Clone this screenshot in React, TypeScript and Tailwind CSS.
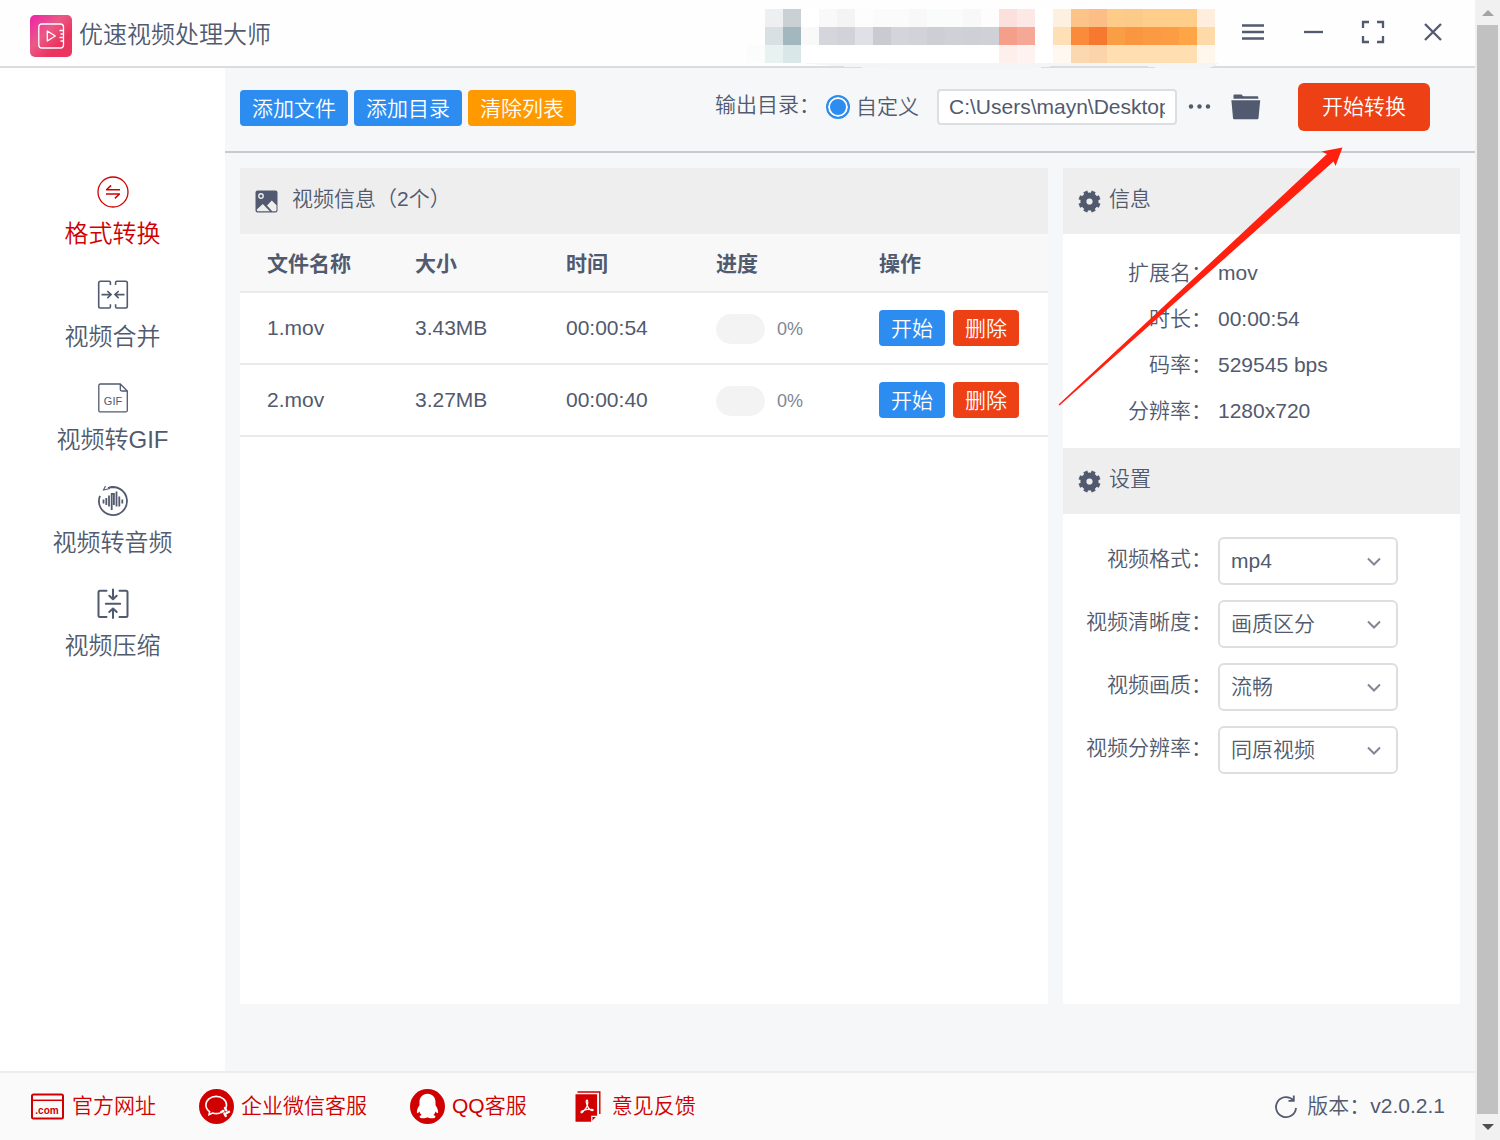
import { useState, type ReactNode } from 'react';

const mosaic = [
  ['#eeeff1', '#cad0d4', '#fff', '#f9f9f9', '#f4f4f4', '#fdfdfd', '#fbfbfb', '#fbfbfb', '#f8f8f8', '#fafcfb', '#fbfbfb', '#f8f8f8', '#fdfdfd', '#fce0db', '#fce8e4', '#fff', '#fef0e0', '#fcc488', '#fcbd86', '#fecb88', '#fccb89', '#ffce8a', '#ffcf8a', '#ffce8a', '#ffeedd'],
  ['#d9e0e4', '#a3b8be', '#f9f9f9', '#d5d6db', '#d2d3d8', '#e0e1e6', '#cacbd1', '#d4d5da', '#d2d3d8', '#ccd0d4', '#d0d1d7', '#cdd0d5', '#d0d1d7', '#f59f8b', '#f6a896', '#fff', '#ffdfb5', '#f98b3a', '#f6792f', '#f99e45', '#fa963f', '#fc9a43', '#fc9d45', '#ffa545', '#fddaa8'],
  ['#e8f2f0', '#d9e7e8', '#fff', '#fff', '#fff', '#fff', '#fff', '#fff', '#fff', '#fff', '#fff', '#fff', '#fff', '#fdefec', '#fef3f1', '#fff', '#fff8f0', '#fcd8b0', '#fcd4ac', '#ffdfb1', '#ffdfb1', '#ffdfb1', '#ffdfb1', '#ffdfb1', '#fff6ec'],
];

const videos = [
  { name: '1.mov', size: '3.43MB', time: '00:00:54', progress: 0 },
  { name: '2.mov', size: '3.27MB', time: '00:00:40', progress: 0 },
];

const info = [
  ['扩展名', 'mov'],
  ['时长', '00:00:54'],
  ['码率', '529545 bps'],
  ['分辨率', '1280x720'],
];

const settings = [
  { id: 'format', label: '视频格式', options: ['mp4', 'avi', 'mkv'] },
  { id: 'clarity', label: '视频清晰度', options: ['画质区分', '码率区分'] },
  { id: 'quality', label: '视频画质', options: ['流畅', '标清', '高清'] },
  { id: 'resolution', label: '视频分辨率', options: ['同原视频', '1920x1080', '1280x720'] },
];

const ConvertIcon = () => (
  <svg width="32" height="32" viewBox="0 0 32 32" fill="none" stroke="currentColor">
    <circle cx="16" cy="16" r="15" strokeWidth="1.3" />
    <path d="M9 13.800h14M9.500 13.800l4.600-4.400M23 18H9M22.500 18l-4.600 4.400" strokeWidth="1.500" />
  </svg>
);

const MergeIcon = () => (
  <svg width="32" height="32" viewBox="0 0 32 32" fill="none" stroke="currentColor" strokeWidth="1.600">
    <path d="M13.400 6V3.400c0-.8-.4-1.200-1.200-1.200H3.400C2.400 2.200 1.700 2.800 1.700 3.900v23.400c0 1.100.7 1.700 1.700 1.700h8.800c.8 0 1.200-.4 1.200-1.200v-2.600" />
    <path d="M18.600 6V3.400c0-.8.4-1.200 1.200-1.200h8.800c1 0 1.700.6 1.700 1.700v23.400c0 1.100-.7 1.700-1.700 1.700h-8.800c-.8 0-1.200-.4-1.200-1.200v-2.600" />
    <path d="M4.500 15.600h9.500M10.300 12l3.800 3.600-3.800 3.600M27.500 15.600H18M21.700 12l-3.800 3.600 3.800 3.600" />
  </svg>
);

const GifIcon = () => (
  <svg width="32" height="32" viewBox="0 0 32 32" fill="none" stroke="currentColor" strokeWidth="1.300">
    <path d="M3.300 2h20l7 7v19.400c0 .9-.6 1.500-1.500 1.500H3.300c-.9 0-1.500-.6-1.500-1.500V3.500C1.800 2.600 2.400 2 3.300 2z" />
    <path d="M23.300 2v5.500c0 .9.6 1.500 1.500 1.500h5.500" />
    <text x="16" y="22.500" fontSize="11" textAnchor="middle" fill="currentColor" stroke="none">GIF</text>
  </svg>
);

const AudioIcon = () => (
  <svg width="32" height="32" viewBox="0 0 32 32" fill="none" stroke="currentColor" strokeWidth="1.800">
    <path d="M3 10.800A14 14 0 1 0 11 3C13 2.200 15 1.900 17 2" />
    <path d="M13 3.500l-6.500 1.500 2-4" strokeWidth="1.100" />
    <path d="M6.500 14.500v4M9.300 13v7M12 10.500v11M14.700 25V8.800h2.200V20M19.500 6.500v15M22.300 11.500v10M25.300 14.500v4" strokeWidth="1.800" />
  </svg>
);

const CompressIcon = () => (
  <svg width="32" height="32" viewBox="0 0 32 32" fill="none" stroke="currentColor" strokeWidth="2" strokeLinecap="round" strokeLinejoin="round">
    <path d="M9.500 2.800H3c-1 0-1.500.5-1.500 1.500v23.200c0 1 .5 1.500 1.500 1.500h6.500M22.500 2.800H29c1 0 1.500.5 1.500 1.500v23.200c0 1-.5 1.500-1.500 1.500h-6.500" />
    <path d="M8.800 15.800h14.400M16 1.500v9.500M12.300 7.800L16 11.300l3.700-3.500M16 30v-9M12.300 24L16 20.500l3.700 3.500" />
  </svg>
);

const menu = [
  { label: '格式转换', icon: <ConvertIcon /> },
  { label: '视频合并', icon: <MergeIcon /> },
  { label: '视频转GIF', icon: <GifIcon /> },
  { label: '视频转音频', icon: <AudioIcon /> },
  { label: '视频压缩', icon: <CompressIcon /> },
];

const SiteIcon = () => (
  <svg width="35" height="35" viewBox="0 0 35 35" fill="none" stroke="currentColor" strokeWidth="2">
    <rect x="2" y="5.500" width="31" height="24" rx="1.500" />
    <path d="M2 11.300h31" strokeWidth="1.500" />
    <text x="17" y="25" fontSize="10" fontWeight="700" textAnchor="middle" fill="currentColor" stroke="none">.com</text>
  </svg>
);

const WechatIcon = () => (
  <svg width="35" height="35" viewBox="0 0 35 35" fill="none" stroke="#fff" strokeWidth="1.600">
    <circle cx="17.500" cy="17.500" r="17.500" fill="currentColor" stroke="none" />
    <path d="M27 18.800c.3-.9.5-1.800.5-2.700 0-4.900-4.600-8.700-10.300-8.700S6.900 11.200 6.900 16.100c0 2.700 1.500 5.100 3.700 6.600l-.5 3 3.400-1.700c2.300.8 5 .8 7.400.1" />
    <path d="M26 18.900l1.200 2.300M30 22.800l-2.400 1.200M26.700 26.900l-1.300-2.400M22 23.300l2.400-1.400" strokeWidth="2.400" strokeLinecap="round" />
  </svg>
);

const QQIcon = () => (
  <svg width="35" height="35" viewBox="0 0 35 35">
    <circle cx="17.500" cy="17.500" r="17.500" fill="currentColor" />
    <path d="M17.500 4.800c-5 0-8 3.700-8 8.200v3.200c-1.700 2.400-2.800 5-2.600 7.200.2 1.300 1.300.8 2.500-1 .4 1.500 1.100 2.700 2.200 3.700-1.300.5-2 1-2 1.700 0 2 6 1.900 7.900.5 1.900 1.400 7.900 1.500 7.900-.5 0-.7-.7-1.200-2-1.700 1.100-1 1.800-2.200 2.200-3.700 1.200 1.800 2.300 2.300 2.500 1 .2-2.200-.9-4.800-2.600-7.200V13c0-4.500-3-8.200-8-8.200z" fill="#fff" />
  </svg>
);

const FeedbackIcon = () => (
  <svg width="35" height="35" viewBox="0 0 35 35" fill="none">
    <path d="M7.500 3h22.300V25" stroke="currentColor" strokeWidth="1.400" />
    <path d="M5.500 5.300h21.600v21.500l-6 6H5.500z" fill="currentColor" />
    <path d="M21.800 32.800v-5.500h5.300" stroke="#fff" strokeWidth="1.200" />
    <path d="M17 11.200c-1.400 0-.7 3.200.3 5.300-.6 2-1.800 3.600-3.500 4.900-2 .5-3.300 1.300-2.700 2.100.7.800 1.900-.5 2.700-2.100 2-.9 4-1.200 6-.9 1.600 1.300 3.300 1.500 3.400.6.100-.9-1.700-.9-3.400-.6-1.300-1-2-2.300-2.500-4 .6-2 .8-5.300-.3-5.300z" stroke="#fff" strokeWidth="1.200" />
  </svg>
);

const links = [
  { label: '官方网址', icon: <SiteIcon /> },
  { label: '企业微信客服', icon: <WechatIcon /> },
  { label: 'QQ客服', icon: <QQIcon /> },
  { label: '意见反馈', icon: <FeedbackIcon /> },
];

const windowButtons = [
  { label: '菜单', path: 'M1 5.500h22M1 12h22M1 18.500h22' },
  { label: '最小化', path: 'M3 12h19' },
  { label: '最大化', path: 'M2 8V2h6M16 2h6v6M22 16v6h-6M8 22H2v-6' },
  { label: '关闭', path: 'M4 4l16 16M20 4L4 20' },
];

const teeth = [22.5, 67.5, 112.5, 157.5, 202.5, 247.5, 292.5, 337.5];

const GearIcon = () => (
  <svg width="23" height="23" viewBox="0 0 23 23" fill="none" stroke="currentColor">
    <circle cx="11.500" cy="11.500" r="6.100" strokeWidth="6" />
    {teeth.map((angle) => (
      <path key={angle} d="M11.500 4.500v-4" strokeWidth="4.200" transform={`rotate(${angle} 11.5 11.5)`} />
    ))}
  </svg>
);

const PictureIcon = () => (
  <svg width="23" height="23" viewBox="0 0 23 23">
    <rect x=".5" y=".5" width="22" height="22" rx="2" fill="currentColor" />
    <circle cx="6" cy="6" r="2.200" fill="none" stroke="#eee" strokeWidth="1.400" />
    <path d="M1.800 19.500l6-5.500 7 7.300H3c-.8 0-1.200-.6-1.200-1.800zM12 15.500l4.800-5 4.700 4.700v4.800c0 .8-.5 1.300-1.300 1.300h-3z" fill="#eee" />
  </svg>
);

const PanelHeader = ({ icon, children, className }: { icon: ReactNode; children: ReactNode; className: string }) => (
  <div className={`flex h-[66px] items-center bg-[#eeeeee] pl-[15px] ${className}`}>
    {icon}
    <h2 className="pb-1 text-[21px] leading-8">{children}</h2>
  </div>
);

const Header = () => (
  <header className="flex h-[68px] items-center border-b-2 border-[#dcdcdc] bg-[#fefefe] pr-3 pl-[30px]">
    <div className="flex flex-1 items-center gap-[7px] pt-[6px]">
      <svg width="42" height="42" viewBox="0 0 42 42" fill="none" stroke="#fff" className="shrink-0">
        <defs>
          <linearGradient id="logo" x1="0" y1="0" x2="1" y2="1">
            <stop offset="0" stopColor="#ee22aa" />
            <stop offset=".4" stopColor="#ea5a86" />
            <stop offset=".7" stopColor="#ea335f" />
            <stop offset="1" stopColor="#ea3560" />
          </linearGradient>
        </defs>
        <rect width="42" height="42" rx="5" fill="url(#logo)" stroke="none" />
        <path d="M33.500 14v-2c0-1.800-1.200-3-3-3H11.800c-1.800 0-3 1.200-3 3v18c0 1.800 1.200 3 3 3h18.700c1.800 0 3-1.200 3-3v-2M33.500 14v14M29.500 15.500h4M30.500 19h3M29.500 22.500h4M30.500 26h3" strokeWidth="1.300" />
        <path d="M17.300 16v10l8-5z" strokeWidth="1.300" strokeLinejoin="round" />
      </svg>
      <h1 className="pb-[2px] text-2xl">优速视频处理大师</h1>
    </div>
    {/* account area, pixelated */}
    <svg width="450" height="57" viewBox="0 0 450 57" shapeRendering="crispEdges" className="mr-2 shrink-0 self-end overflow-visible">
      <path d="M35 54H453l-3 3-10 3H400l-20-3H290l-28 3H125l-55-3z" fill="#f4f5f7" />
      <rect x="-18" y="36" width="18" height="18" fill="#fbfdfc" />
      {mosaic.map((row, y) =>
        row.map((color, x) => <rect key={`${x}-${y}`} x={x * 18} y={y * 18} width="18" height="18" fill={color} />)
      )}
    </svg>
    {windowButtons.map((button) => (
      <button key={button.label} aria-label={button.label} className="flex h-full w-[60px] shrink-0 items-center justify-center pb-[2px]">
        <svg width="24" height="24" viewBox="0 0 24 24" fill="none" stroke="currentColor" strokeWidth="2.300">
          <path d={button.path} />
        </svg>
      </button>
    ))}
  </header>
);

const Sidebar = () => {
  const [active, setActive] = useState('格式转换');

  return (
    <nav className="flex w-[225px] shrink-0 flex-col bg-white pt-[108px]">
      {menu.map((item) => (
        <button
          key={item.label}
          onClick={() => setActive(item.label)}
          className={`flex h-[103px] flex-col items-center gap-[10px] text-2xl ${active === item.label ? 'text-[#d00000]' : ''}`}
        >
          {item.icon}
          <span>{item.label}</span>
        </button>
      ))}
    </nav>
  );
};

const Toolbar = () => (
  <div className="flex items-center border-b-2 border-[#c8cacd] pt-[15px] pr-[45px] pb-5 pl-[15px] text-[21px]">
    <div className="flex flex-1 gap-[6px] pt-[2px] text-white">
      <button className="h-9 shrink-0 rounded bg-[#2d8cf0] px-3 pt-[2px]">添加文件</button>
      <button className="h-9 shrink-0 rounded bg-[#2d8cf0] px-3 pt-[2px]">添加目录</button>
      <button className="h-9 shrink-0 rounded bg-[#ff9900] px-3 pt-[2px]">清除列表</button>
    </div>
    <span className="mr-[6px] pb-1 whitespace-nowrap">输出目录：</span>
    <label className="flex items-center gap-[6px] whitespace-nowrap">
      <input
        type="radio"
        name="output"
        defaultChecked
        className="size-6 appearance-none rounded-full border-2 border-[#2d8cf0] bg-white checked:bg-[#2d8cf0] checked:shadow-[inset_0_0_0_2px_white]"
      />
      自定义
    </label>
    <input
      type="text"
      aria-label="输出目录"
      defaultValue="C:\Users\mayn\Desktop"
      className="ml-[18px] h-9 w-60 rounded border-2 border-[#dcdee2] bg-white px-[10px]"
    />
    <button aria-label="选择目录" className="ml-[11px]">
      <svg width="24" height="24" viewBox="0 0 24 24" fill="currentColor">
        <circle cx="3" cy="11.500" r="2.200" />
        <circle cx="11.500" cy="11.500" r="2.200" />
        <circle cx="20" cy="11.500" r="2.200" />
      </svg>
    </button>
    <button aria-label="打开目录" className="ml-[19px]">
      <svg width="30" height="26" viewBox="0 0 30 26" fill="currentColor">
        <path d="M2.500 4.800V1.500C2.500.9 3 .4 3.500.4h6.800c.8 0 1.300 1.900 2.300 1.900h13.500c.7 0 1.200.5 1.200 1.200v1.300z" />
        <path d="M.4 6.300h28.800L27.500 24c-.1.800-.6 1.300-1.300 1.300H3.300c-.7 0-1.200-.5-1.300-1.300z" />
      </svg>
    </button>
    <button className="ml-[37px] h-12 w-[132px] shrink-0 rounded-md bg-[#ed4014] text-white">开始转换</button>
  </div>
);

const VideoTable = () => (
  <section className="min-w-0 flex-1 bg-white">
    <PanelHeader icon={<PictureIcon />} className="gap-[14px]">视频信息（2个）</PanelHeader>
    <table className="w-full table-fixed text-left text-[21px]">
      <colgroup>
        <col className="w-[148px]" />
        <col className="w-[151px]" />
        <col className="w-[150px]" />
        <col className="w-[163px]" />
        <col />
      </colgroup>
      <thead>
        <tr className="h-[58px] border-b-2 border-[#e8eaec] bg-[#f8f8f9]">
          {['文件名称', '大小', '时间', '进度', '操作'].map((title) => (
            <th key={title} className="pt-[2px] pl-[27px] font-bold">{title}</th>
          ))}
        </tr>
      </thead>
      <tbody>
        {videos.map((video) => (
          <tr key={video.name} className="h-[72px] border-b-2 border-[#e8eaec]">
            <td className="pl-[27px]">{video.name}</td>
            <td className="pl-[27px]">{video.size}</td>
            <td className="pl-[27px]">{video.time}</td>
            <td className="pl-[27px]">
              <div className="flex items-center gap-3 pt-[2px]">
                <div className="h-[30px] w-[49px] overflow-hidden rounded-full bg-[#f3f3f3]">
                  <div className="h-full bg-[#2d8cf0]" style={{ width: `${video.progress}%` }} />
                </div>
                <span className="text-lg text-[#808695]">{video.progress}%</span>
              </div>
            </td>
            <td className="pl-[27px]">
              <div className="flex gap-2 text-white">
                <button className="h-9 rounded bg-[#2d8cf0] px-3 pt-[2px]">开始</button>
                <button className="h-9 rounded bg-[#ed4014] px-3 pt-[2px]">删除</button>
              </div>
            </td>
          </tr>
        ))}
      </tbody>
    </table>
  </section>
);

const SidePanel = () => (
  <aside className="w-[397px] shrink-0 bg-white text-[21px]">
    <PanelHeader icon={<GearIcon />} className="gap-2">信息</PanelHeader>
    <dl className="pt-4 pb-[14px]">
      {info.map(([label, value]) => (
        <div key={label} className="flex h-[46px] items-center gap-[6px]">
          <dt className="w-[149px] text-right">{label}：</dt>
          <dd>{value}</dd>
        </div>
      ))}
    </dl>
    <PanelHeader icon={<GearIcon />} className="gap-2">设置</PanelHeader>
    <form className="flex flex-col gap-[15px] pt-[23px]">
      {settings.map((item) => (
        <div key={item.id} className="flex items-center gap-[6px]">
          <label htmlFor={item.id} className="w-[149px] pb-1 text-right">{item.label}：</label>
          <div className="relative">
            <select id={item.id} className="h-12 w-[180px] appearance-none rounded-md border-2 border-[#dcdee2] bg-white pl-[11px]">
              {item.options.map((option) => (
                <option key={option}>{option}</option>
              ))}
            </select>
            <svg width="14" height="10" viewBox="0 0 14 10" fill="none" stroke="#808695" strokeWidth="2" className="pointer-events-none absolute top-5 right-[17px]">
              <path d="M1 1.500l6 6 6-6" />
            </svg>
          </div>
        </div>
      ))}
    </form>
  </aside>
);

const Footer = () => (
  <footer className="flex h-[69px] items-center gap-[43px] border-t-2 border-[#ededed] bg-[#fafafa] px-[30px] text-[21px]">
    {links.map((link) => (
      <a key={link.label} href="#" className="flex items-center gap-[7px] whitespace-nowrap text-[#d00000]">
        {link.icon}
        <span className="pb-px">{link.label}</span>
      </a>
    ))}
    <div className="ml-auto flex items-center gap-[9px] whitespace-nowrap">
      <svg width="24" height="26" viewBox="0 0 24 26" fill="none" stroke="currentColor" strokeWidth="1.800">
        <path d="M19.500 6.500A10 10 0 1 0 22 14" />
        <path d="M14.500 6.800h5.300V1.500" />
      </svg>
      <span className="pb-px">版本：v2.0.2.1</span>
    </div>
  </footer>
);

export default function App() {
  return (
    <div className="flex min-h-screen bg-[#f5f7f9] font-['Liberation_Sans','Noto_Sans_CJK_SC',sans-serif] font-[350] text-[#515a6e]">
      <div className="relative flex min-w-0 flex-1 flex-col">
        <Header />
        <div className="flex flex-1">
          <Sidebar />
          <main className="flex min-w-0 flex-1 flex-col">
            <Toolbar />
            <div className="flex flex-1 gap-[15px] px-[15px] pt-[15px] pb-[67px]">
              <VideoTable />
              <SidePanel />
            </div>
          </main>
        </div>
        <Footer />
        {/* pointer to the start button */}
        <svg width="286" height="260" viewBox="0 0 286 260" className="pointer-events-none absolute top-[147px] right-[131px]">
          <path d="M.5 257.500L269 7l-5.500-2.500L284.500.500 277.500 19l-2-4.500L1.500 258.500z" fill="#ff2010" />
        </svg>
      </div>
      <div aria-hidden="true" className="flex w-[25px] shrink-0 flex-col items-center bg-[#f1f1f1]">
        <svg width="12" height="25" viewBox="0 0 12 25" fill="#a3a3a3">
          <path d="M0 16l6-6 6 6z" />
        </svg>
        <div className="w-[21px] flex-1 bg-[#c1c1c1]" />
        <svg width="12" height="26" viewBox="0 0 12 26" fill="#505050">
          <path d="M0 10l6 6 6-6z" />
        </svg>
      </div>
    </div>
  );
}
